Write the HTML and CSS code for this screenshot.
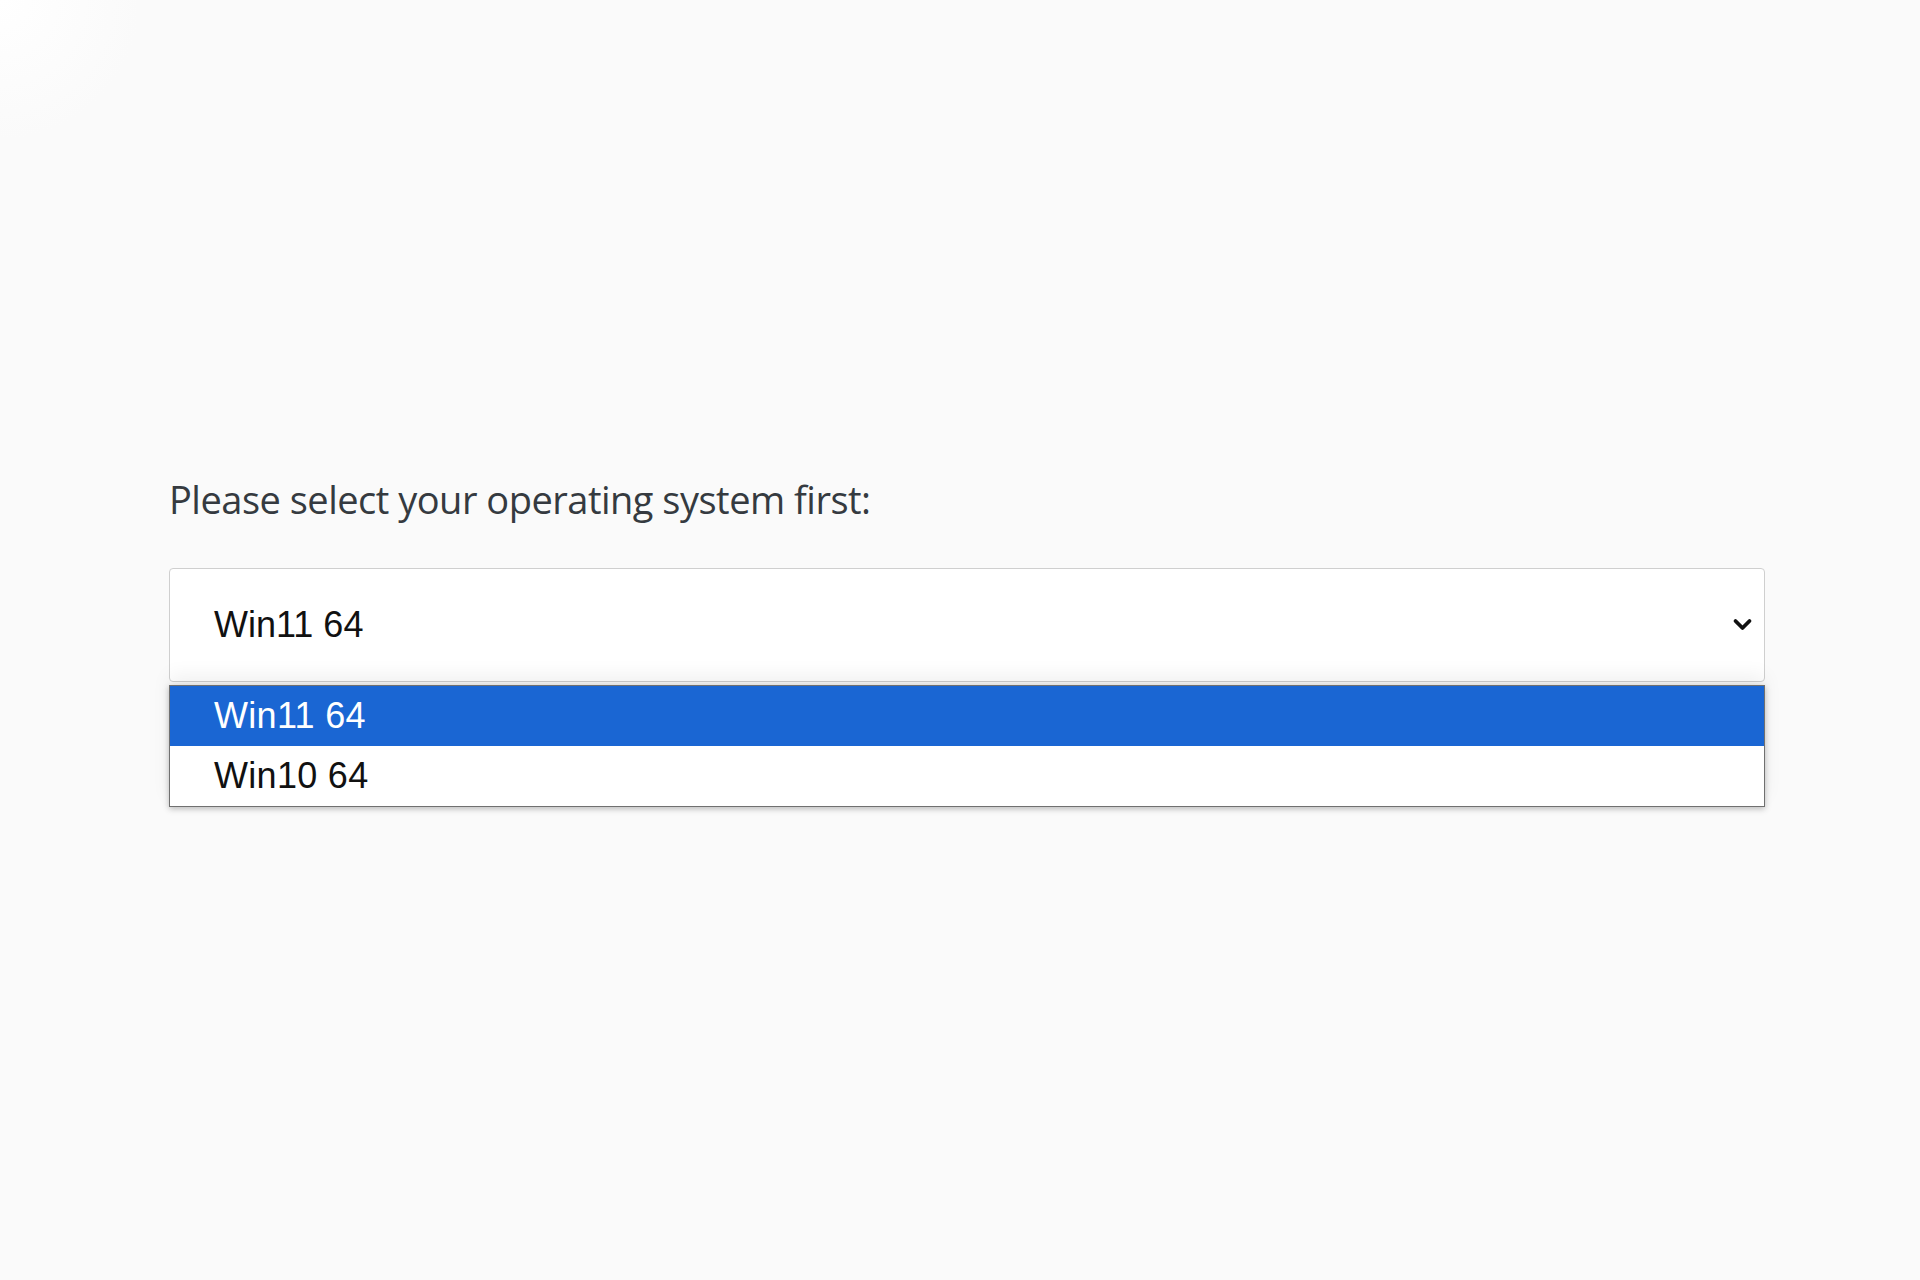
FILE: index.html
```html
<!DOCTYPE html>
<html lang="en">
<head>
<meta charset="utf-8">
<title>Select OS</title>
<link rel="stylesheet" href="styles.css">
</head>
<body>
<main class="page">
  <label class="field-label">Please select your operating system first:</label>
  <div class="select-wrap">
    <div class="select">
      <span class="select-value">Win11 64</span>
      <svg class="chevron" viewBox="0 0 20 14" width="21" height="14" aria-hidden="true">
        <path d="M3 3 L10 10 L17 3" fill="none" stroke="#111" stroke-width="3.8" stroke-linecap="round" stroke-linejoin="round"/>
      </svg>
    </div>
    <ul class="options">
      <li class="option selected">Win11 64</li>
      <li class="option">Win10 64</li>
    </ul>
  </div>
</main>
</body>
</html>
```

FILE: styles.css
```css
html, body {
  margin: 0;
  padding: 0;
}
body {
  width: 1920px;
  height: 1280px;
  background: radial-gradient(circle at 0 0, #ffffff 0, #fafafa 140px) #f9f9f9;
  overflow: hidden;
}
.page {
  padding: 474px 155px 0 169px;
  display: flex;
  flex-direction: column;
}
.field-label {
  font-family: "Open Sans", "Noto Sans", sans-serif;
  font-size: 38px;
  line-height: 50px;
  color: #353a40;
  letter-spacing: -0.5px;
}
.select-wrap {
  position: relative;
  margin-top: 44px;
}
.select {
  height: 114px;
  box-sizing: border-box;
  border: 1px solid #cfcfcf;
  border-radius: 4px;
  background: #fff;
  display: flex;
  align-items: center;
  justify-content: space-between;
  padding: 0 11px 0 44px;
}
.select-value {
  font-family: "Liberation Sans", Arial, sans-serif;
  font-size: 36px;
  color: #111;
}
.chevron {
  display: block;
}
.options {
  position: absolute;
  left: 0;
  right: 0;
  top: 117px;
  margin: 0;
  padding: 0;
  list-style: none;
  background: #fff;
  border: 1px solid #707070;
  box-shadow: 0 2px 6px rgba(0, 0, 0, 0.25), 0 -10px 18px rgba(0, 0, 0, 0.06);
}
.option {
  height: 60px;
  display: flex;
  align-items: center;
  padding-left: 44px;
  font-family: "Liberation Sans", Arial, sans-serif;
  font-size: 36px;
  letter-spacing: 0.3px;
  color: #111;
}
.option.selected {
  background: #1a66d3;
  color: #fff;
}
```
